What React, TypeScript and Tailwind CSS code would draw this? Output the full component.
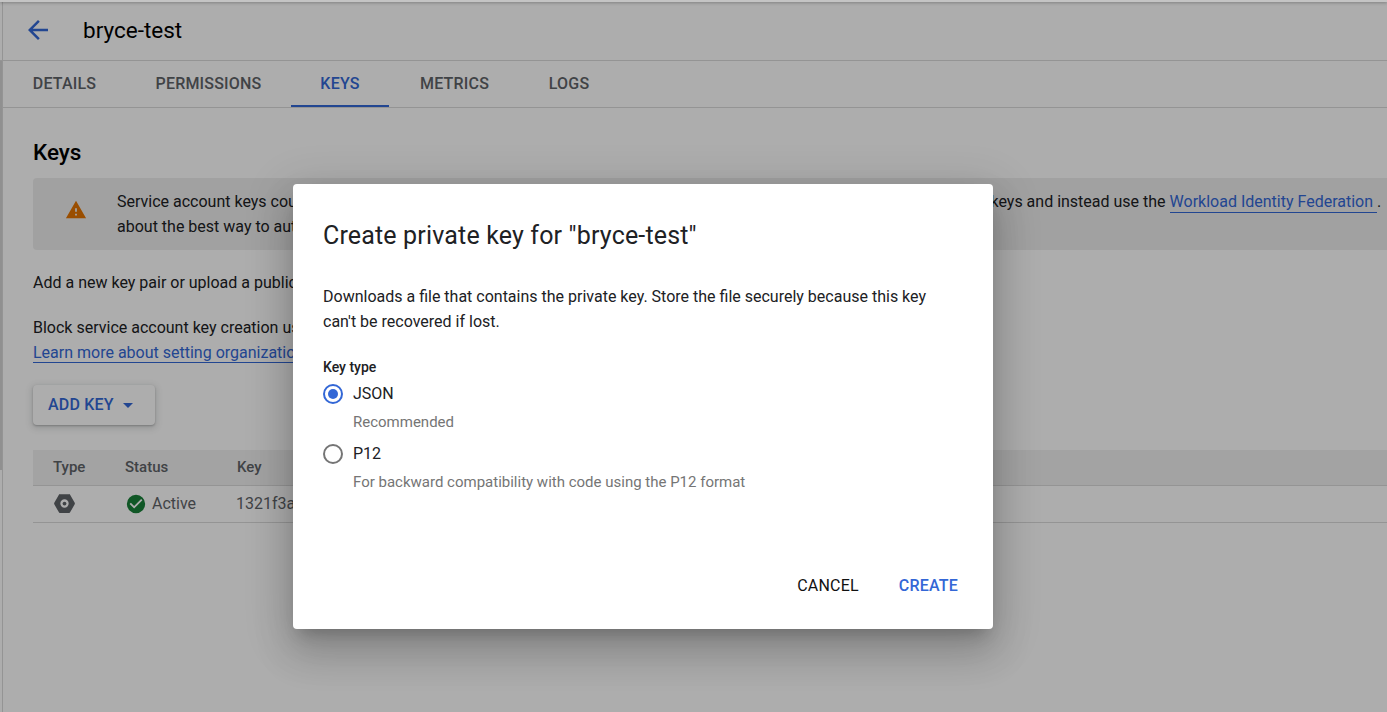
import React from "react";

function Tab({ label, active, className }: { label: string; active?: boolean; className: string }) {
  return (
    <div className={`h-[46px] pt-[2px] flex items-center justify-center text-[16px] font-medium tracking-[0.2px] border-b-2 ${active ? "text-[#3367d6] border-[#3367d6]" : "text-[#5f6368] border-transparent"} ${className}`}>
      {label}
    </div>
  );
}

function Radio({ checked }: { checked?: boolean }) {
  return (
    <span className={`w-5 h-5 rounded-full border-2 flex items-center justify-center shrink-0 ${checked ? "border-[#3367d6]" : "border-[#757575]"}`}>
      {checked && <span className="w-[10px] h-[10px] rounded-full bg-[#3367d6]" />}
    </span>
  );
}

export default function App() {
  return (
    <div className="relative w-[1387px] h-[712px] overflow-hidden bg-white text-[#202124] font-['Roboto',sans-serif]">
      <div className="relative z-10 h-[2px] bg-[#c4c4c4] shadow-[0_1px_3px_rgba(0,0,0,0.3)]" />
      <div className="h-[59px] pb-[2px] flex items-center border-b border-[#dadada] pl-[23px]">
        <svg width="30" height="30" viewBox="0 0 24 24" fill="#3367d6"><path d="M20 11H7.83l5.59-5.59L12 4l-8 8 8 8 1.41-1.41L7.83 13H20v-2z" /></svg>
        <span className="ml-[30px] text-[22.5px] leading-7 text-black">bryce-test</span>
      </div>
      <div className="h-[47px] flex border-b border-[#dadada] pl-[3px]">
        <Tab label="DETAILS" className="w-[123px]" />
        <Tab label="PERMISSIONS" className="w-[165px]" />
        <Tab label="KEYS" active className="w-[98px]" />
        <Tab label="METRICS" className="w-[131px]" />
        <Tab label="LOGS" className="w-[98px]" />
      </div>
      <div className="pl-[33px]">
        <h1 className="mt-[30px] text-[22.5px] leading-7 font-medium text-black">Keys</h1>
        <div className="mt-[12px] h-[72px] w-[1400px] rounded-[4px] bg-[#eeeeee] flex items-center">
          <svg className="ml-[32px] mb-[8px] shrink-0" width="22" height="22" viewBox="0 0 24 24" fill="#e37400"><path d="M1 21h22L12 2 1 21zm12-3h-2v-2h2v2zm0-4h-2v-4h2v4z" /></svg>
          <div className="ml-[30px] text-[16px] leading-[25px] whitespace-nowrap text-[#202124]">
            <div>
              Service account keys could pose a security risk if compromised. We recommend that you avoid generating service account keys and instead use the{" "}
              <span className="text-[#3367d6] border-b border-[#3367d6] pb-[1px]">Workload Identity Federation </span> .
            </div>
            <div>about the best way to authenticate service accounts on Google Cloud here.</div>
          </div>
        </div>
        <p className="mt-[20px] text-[16px] leading-[25px]">Add a new key pair or upload a public key certificate from an existing key pair.</p>
        <p className="mt-[20px] text-[16px] leading-[25px]">Block service account key creation using organization policies.</p>
        <p className="text-[16px] leading-[25px]"><span className="text-[#3367d6] border-b border-[#3367d6]">Learn more about setting organization policies for service accounts</span></p>
        <button className="mt-[20px] w-[122px] h-[40px] rounded-[4px] bg-white shadow-[0_1px_2px_0_rgba(60,64,67,0.3),0_2px_6px_2px_rgba(60,64,67,0.15)] flex items-center pl-[15px] text-[16px] font-medium tracking-[0.2px] text-[#3367d6]">
          ADD KEY
          <svg className="ml-[2px]" width="24" height="24" viewBox="0 0 24 24" fill="#3367d6"><path d="M7 10l5 5 5-5z" /></svg>
        </button>
        <div className="mt-[25px] w-[1354px] h-[36px] bg-[#f1f1f1] border-b border-[#dadada] flex items-center text-[15px] font-medium text-[#5f6368]">
          <span className="ml-[20px] w-[72px]">Type</span>
          <span className="w-[111px]">Status</span>
          <span className="ml-[1px]">Key</span>
        </div>
        <div className="w-[1354px] h-[37px] pb-[1px] border-b border-[#dadada] flex items-center text-[16px] text-[#5f6368]">
          <svg className="ml-[19px]" width="25" height="25" viewBox="0 0 24 24" fill="#5f6368"><path fillRule="evenodd" d="M7.5 3h9a1 1 0 0 1 .87.5l4.3 7.5a2 2 0 0 1 0 2l-4.3 7.5a1 1 0 0 1-.87.5h-9a1 1 0 0 1-.87-.5L2.33 13a2 2 0 0 1 0-2l4.3-7.5A1 1 0 0 1 7.5 3zM12 8a4 4 0 1 0 0 8 4 4 0 0 0 0-8z" /><circle cx="12" cy="12" r="1.8" /></svg>
          <span className="ml-[48px] flex items-center w-[111px]">
            <svg width="22" height="22" viewBox="0 0 24 24" fill="#188038"><path d="M12 2a10 10 0 1 0 0 20 10 10 0 0 0 0-20zm-2 15-5-5 1.41-1.41L10 14.17l7.59-7.59L19 8l-9 9z" /></svg>
            <span className="ml-[5px]">Active</span>
          </span>
          <span>1321f3ab7c90e4d2a1</span>
        </div>
      </div>

      <div className="absolute left-[2px] top-0 bottom-0 w-px bg-[#dadada]" />
      <div className="absolute left-0 top-[61px] h-[409px] w-[2px] bg-[#d4d4d4]" />
      <div className="absolute inset-0 bg-black/[0.32]" />

      <div role="dialog" className="absolute left-[293px] top-[184px] w-[700px] h-[445px] rounded-[4px] bg-white shadow-[0_11px_15px_-7px_rgba(0,0,0,0.2),0_24px_38px_3px_rgba(0,0,0,0.14),0_9px_46px_8px_rgba(0,0,0,0.12)] flex flex-col pl-[30px] pr-[21px]">
        <h2 className="mt-[38px] text-[25px] leading-7 tracking-[0.16px] font-normal text-[#202124]">Create private key for "bryce-test"</h2>
        <p className="mt-[34px] text-[16px] leading-[25px] w-[640px] text-[#202124]">
          Downloads a file that contains the private key. Store the file securely because this key can't be recovered if lost.
        </p>
        <div className="mt-[23px] text-[14px] leading-[20px] font-medium text-[#202124]">Key type</div>
        <div className="mt-[7px] flex items-center h-5 gap-[10px] text-[16px] text-[#202124]"><Radio checked />JSON</div>
        <div className="mt-[8px] ml-[30px] text-[15px] leading-[20px] text-[#757575]">Recommended</div>
        <div className="mt-[12px] flex items-center h-5 gap-[10px] text-[16px] text-[#202124]"><Radio />P12</div>
        <div className="mt-[8px] ml-[30px] text-[15px] leading-[20px] text-[#757575]">For backward compatibility with code using the P12 format</div>
        <div className="mt-auto mb-[25px] flex justify-end items-center h-9 text-[16px] tracking-[0.2px]">
          <button className="px-[14px] text-[#111111]">CANCEL</button>
          <button className="ml-[12px] px-[14px] font-medium text-[#3367d6]">CREATE</button>
        </div>
      </div>
    </div>
  );
}
